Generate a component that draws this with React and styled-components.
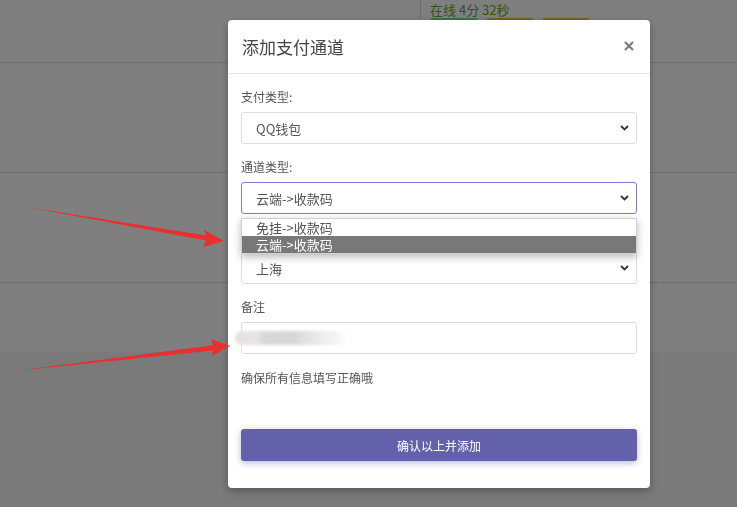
import React from "react";
import styled, { createGlobalStyle } from "styled-components";

const GlobalStyle = createGlobalStyle`
  html, body { margin: 0; padding: 0; background: #f4f4f4; }
  body { font-family: "Noto Sans CJK SC", "Noto Sans", sans-serif; width: 737px; height: 507px; overflow: hidden; }
`;

const Page = styled.div`
  width: 737px;
  height: 507px;
  position: relative;
`;

const Table = styled.div`
  background: #ffffff;
  display: flex;
  flex-direction: column;
`;

const Row = styled.div`
  height: ${(p) => p.$h}px;
  border-bottom: ${(p) => (p.$last ? "none" : "1px solid #dcdcdc")};
  display: grid;
  grid-template-columns: 420px 1fr;
  box-sizing: border-box;
`;

const Cell = styled.div`
  border-left: ${(p) => (p.$divider ? "1px solid #dcdcdc" : "none")};
  padding: 2px 0 0 9px;
  display: flex;
  flex-direction: column;
  gap: 1px;
`;

const Status = styled.div`
  font-size: 13px;
  line-height: 15px;
  color: #6aa81e;
`;

const Badges = styled.div`
  display: flex;
  gap: 8px;
`;

const Badge = styled.span`
  width: 48px;
  height: 16px;
  border-radius: 3px;
  background: ${(p) => p.$c};
`;

const Overlay = styled.div`
  position: fixed;
  inset: 0;
  background: rgba(0, 0, 0, 0.5);
  padding: 20px 0 0 228px;
  box-sizing: border-box;
`;

const Modal = styled.div`
  width: 422px;
  height: 468px;
  background: #ffffff;
  border-radius: 4px;
  display: flex;
  flex-direction: column;
  box-shadow: 0 3px 9px rgba(0, 0, 0, 0.3);
`;

const Header = styled.div`
  height: 53px;
  border-bottom: 1px solid #e5e5e5;
  display: flex;
  align-items: center;
  justify-content: space-between;
  padding: 0 16px 0 14px;
  box-sizing: content-box;
`;

const Title = styled.h4`
  margin: 0;
  font-size: 17px;
  font-weight: 400;
  color: #444;
`;

const CloseIcon = styled.svg`
  margin-top: -2px;
  display: block;
`;

const Body = styled.div`
  padding: 14px 13px 0 13px;
  display: flex;
  flex-direction: column;
  position: relative;
`;

const Group = styled.div`
  display: flex;
  flex-direction: column;
  margin-bottom: 14px;
  position: relative;
`;

const Label = styled.label`
  font-size: 12px;
  line-height: 17px;
  color: #555;
  margin-bottom: 7px;
`;

const SelectBox = styled.div`
  height: 32px;
  box-sizing: border-box;
  border: 1px solid ${(p) => (p.$focus ? "#7f7ac6" : "#dcdce3")};
  border-radius: 3px;
  display: flex;
  align-items: center;
  justify-content: space-between;
  padding: 0 7px 0 14px;
  font-size: 13px;
  color: #555;
  background: #fff;
`;

const InputBox = styled(SelectBox)`
  position: relative;
`;

const Dropdown = styled.div`
  position: absolute;
  top: 60px;
  left: 0;
  right: 0;
  background: #fff;
  border: 1px solid #d0d0d0;
  box-shadow: 0 3px 8px rgba(0, 0, 0, 0.28);
  display: flex;
  flex-direction: column;
  z-index: 2;
`;

const Option = styled.div`
  height: 17px;
  line-height: 17px;
  font-size: 13px;
  padding-left: 14px;
  overflow: hidden;
  background: ${(p) => (p.$active ? "#787878" : "#fff")};
  color: ${(p) => (p.$active ? "#fff" : "#555")};
`;

const Redact = styled.div`
  position: absolute;
  left: -7px;
  top: 8px;
  width: 112px;
  height: 14px;
  border-radius: 7px;
  background: linear-gradient(90deg, #eadede 0%, #e6e2e2 10%, #e4e4e4 20%, #d8d8d8 26%, #d6d6d6 52%, #e2e2e2 64%, #ececec 76%, #f4f4f4 90%, rgba(255,255,255,0) 100%);
  filter: blur(1.5px);
`;

const Note = styled.div`
  font-size: 12px;
  line-height: 17px;
  color: #555;
  margin-top: 1px;
`;

const Button = styled.button`
  margin-top: 43px;
  height: 32px;
  border: none;
  border-radius: 3px;
  background: #6461ab;
  color: #fff;
  font-family: "Noto Sans CJK SC", sans-serif;
  font-size: 12px;
  box-shadow: 0 2px 6px rgba(100, 97, 171, 0.45);
`;

const Arrows = styled.svg`
  position: absolute;
  left: 0;
  top: 0;
  pointer-events: none;
  z-index: 10;
`;

const Chevron = () => (
  <svg width="9" height="6" viewBox="0 0 9 6">
    <path d="M1 1 L4.5 4.5 L8 1" fill="none" stroke="#333" strokeWidth="1.8" />
  </svg>
);

export default function App() {
  return (
    <Page>
      <GlobalStyle />
      <Table>
        <Row $h={63}>
          <Cell />
          <Cell $divider>
            <Status>在线 4分 32秒</Status>
            <Badges>
              <Badge $c="#7cdca0" />
              <Badge $c="#f0c040" />
              <Badge $c="#f0c040" />
            </Badges>
          </Cell>
        </Row>
        <Row $h={110} />
        <Row $h={110} />
        <Row $h={69} $last />
      </Table>
      <Overlay>
        <Modal>
          <Header>
            <Title>添加支付通道</Title>
            <CloseIcon width="10" height="10" viewBox="0 0 10 10">
              <path d="M1 1 L9 9 M9 1 L1 9" stroke="#7a7a7a" strokeWidth="2.2" />
            </CloseIcon>
          </Header>
          <Body>
            <Group>
              <Label>支付类型:</Label>
              <SelectBox>
                <span>QQ钱包</span>
                <Chevron />
              </SelectBox>
            </Group>
            <Group>
              <Label>通道类型:</Label>
              <SelectBox $focus>
                <span>云端-&gt;收款码</span>
                <Chevron />
              </SelectBox>
              <Dropdown>
                <Option>免挂-&gt;收款码</Option>
                <Option $active>云端-&gt;收款码</Option>
              </Dropdown>
            </Group>
            <Group>
              <Label>所在城市:</Label>
              <SelectBox>
                <span>上海</span>
                <Chevron />
              </SelectBox>
            </Group>
            <Group>
              <Label>备注</Label>
              <InputBox>
                <Redact />
              </InputBox>
            </Group>
            <Note>确保所有信息填写正确哦</Note>
            <Button>确认以上并添加</Button>
          </Body>
        </Modal>
      </Overlay>
      <Arrows width="737" height="507" viewBox="0 0 737 507">
        <polygon
          points="27,207 206,235.6 204,230 224,241 203,247 206,240.4"
          fill="#e8302e"
        />
        <polygon
          points="15,371 213,345.3 211,339 230,346 212,356 213,350.5"
          fill="#e8302e"
        />
      </Arrows>
    </Page>
  );
}
